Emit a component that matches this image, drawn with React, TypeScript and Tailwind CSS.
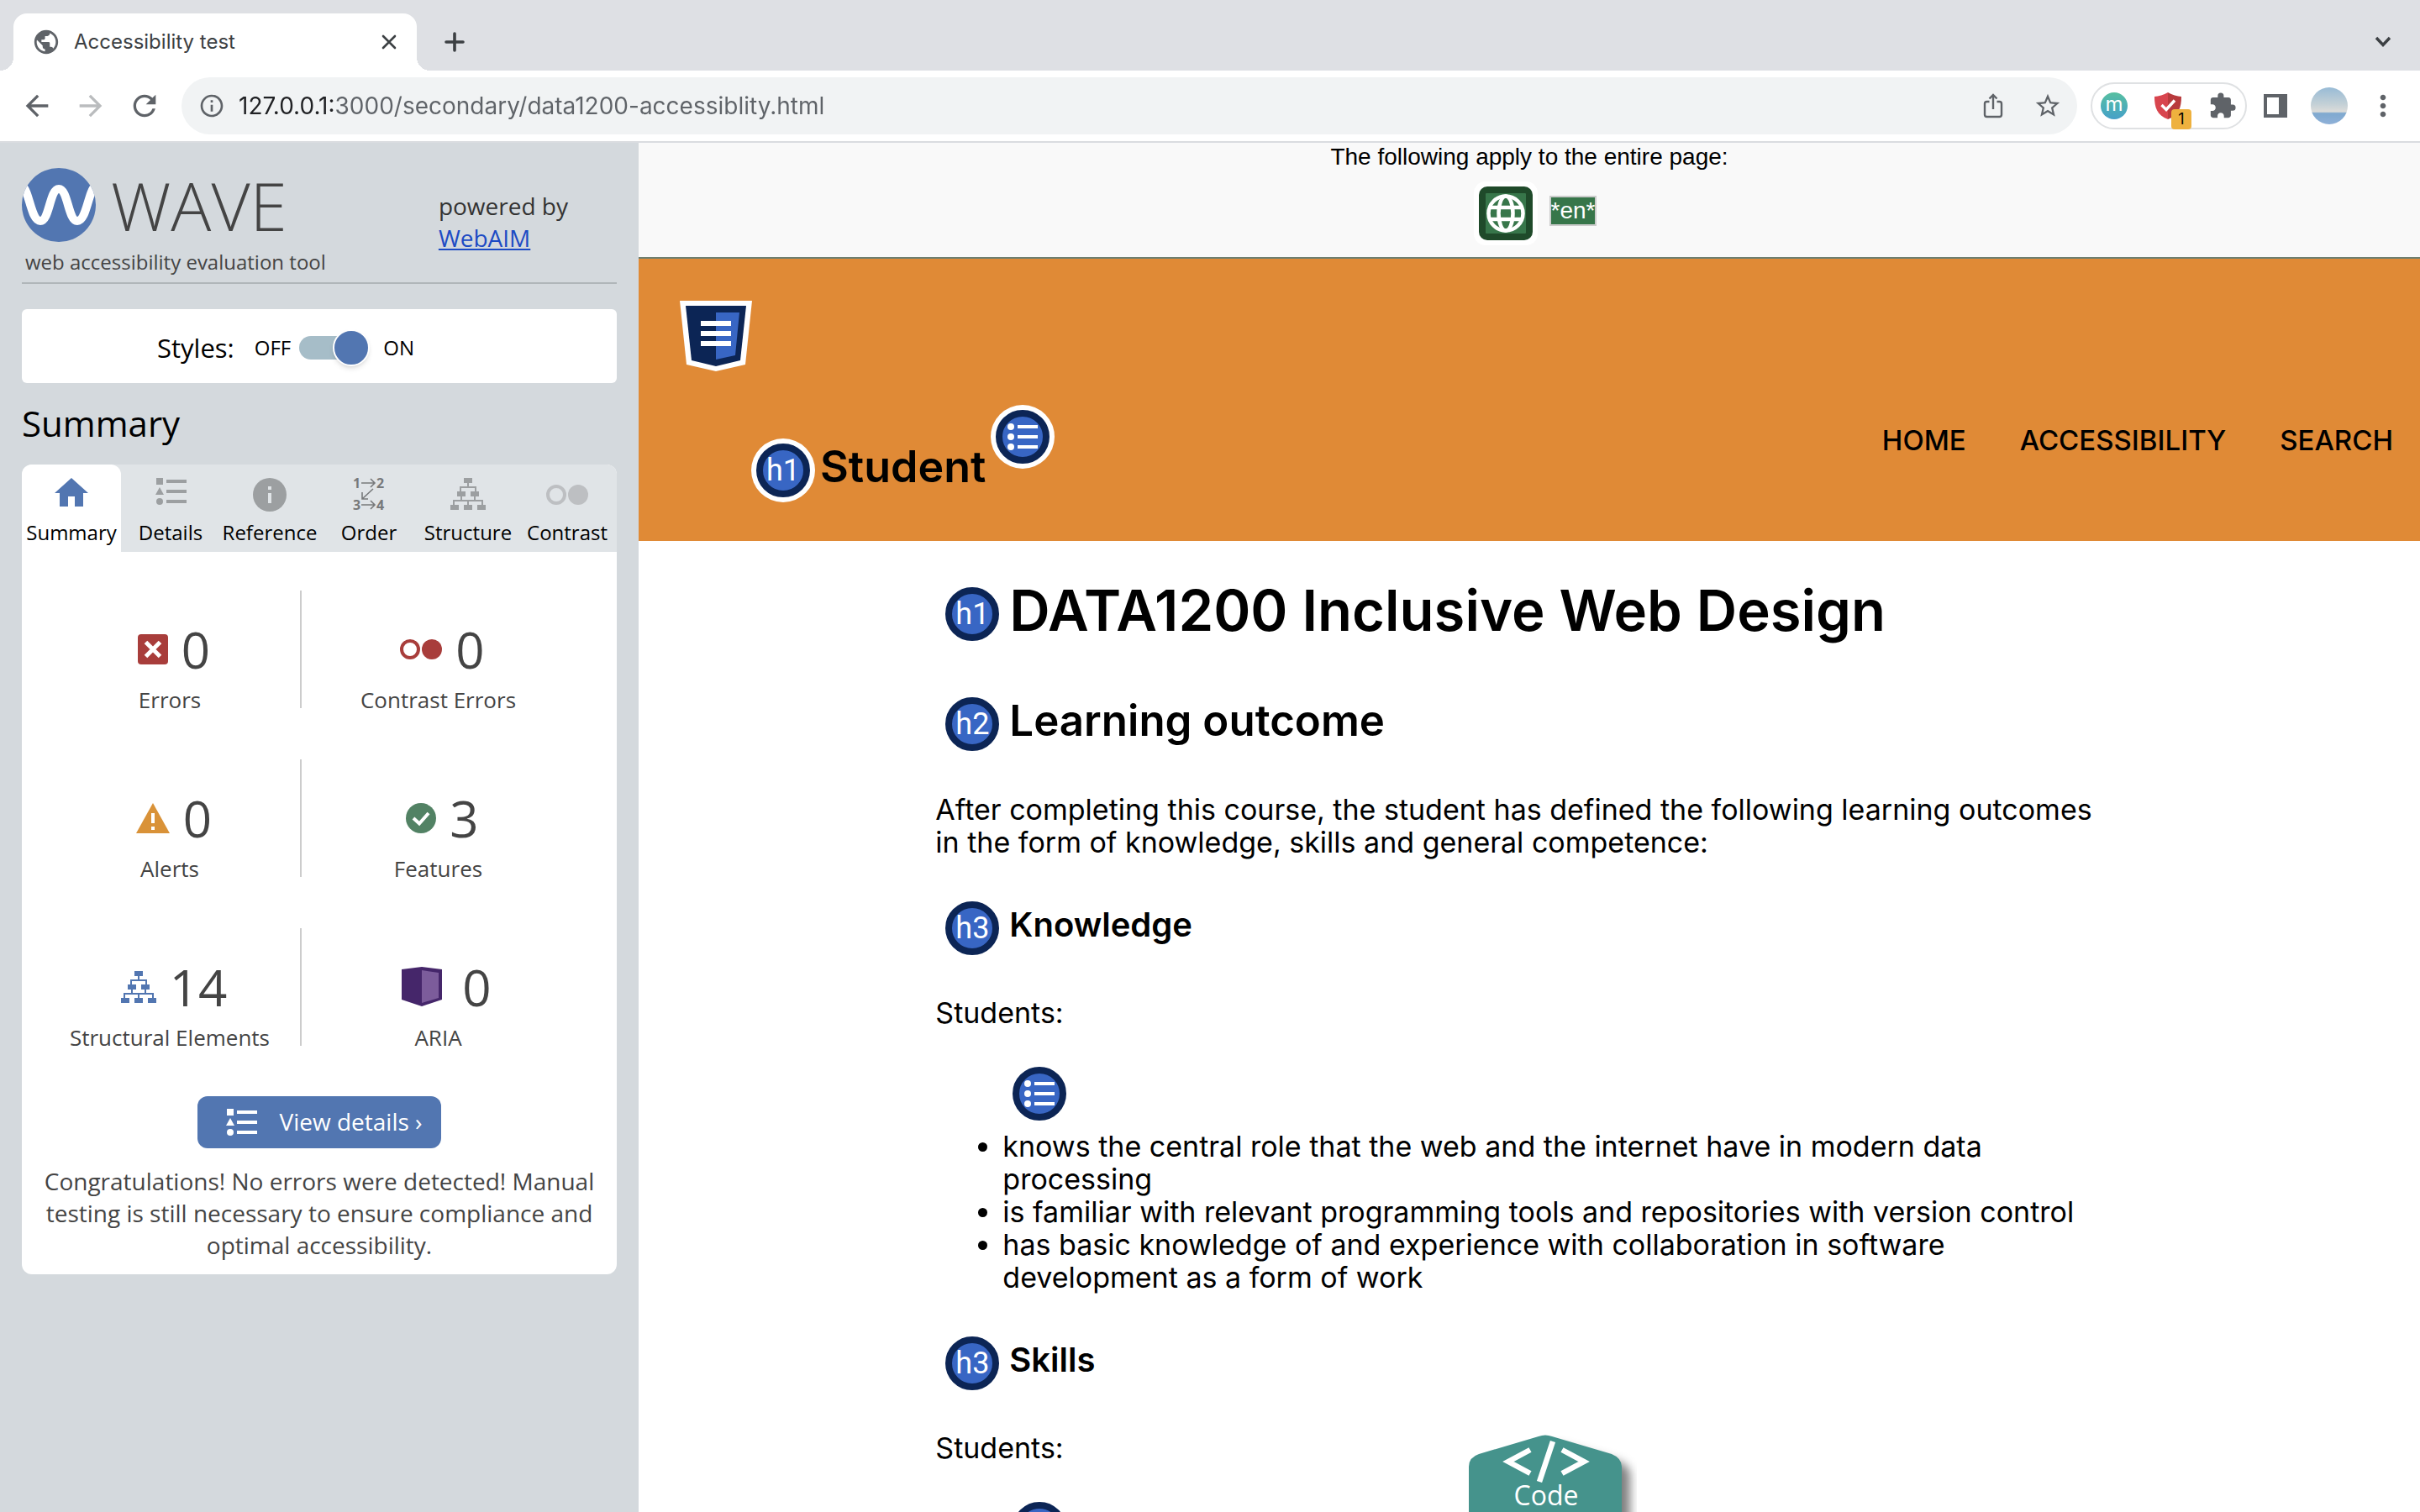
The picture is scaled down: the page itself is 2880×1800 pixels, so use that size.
import type { ReactNode } from "react";
import {
  MdArrowBack,
  MdArrowForward,
  MdExtension,
  MdInfoOutline,
  MdMoreVert,
  MdPublic,
  MdRefresh,
  MdStarBorder,
} from "react-icons/md";

/* ---------- Drawings ---------- */

function CloseIcon() {
  return (
    <svg width="18" height="18" viewBox="0 0 18 18" stroke="#3c4043" strokeWidth="2.600" strokeLinecap="round">
      <path d="M2 2 16 16M16 2 2 16" />
    </svg>
  );
}

function PlusIcon() {
  return (
    <svg width="26" height="26" viewBox="0 0 26 26" stroke="#3c4043" strokeWidth="3.600" strokeLinecap="round">
      <path d="M13 3V23M3 13H23" />
    </svg>
  );
}

function ChevronIcon() {
  return (
    <svg width="20" height="14" viewBox="0 0 20 14" fill="none" stroke="#3c4043" strokeWidth="3.4">
      <path d="M2 2 10 10.5 18 2" />
    </svg>
  );
}

function ShareIcon() {
  return (
    <svg width="24" height="30" viewBox="0 0 24 30" fill="none" stroke="#5f6368" strokeWidth="2.4">
      <path d="M7.500 10H4.500a2.500 2.500 0 0 0-2.500 2.500V25.500A2.500 2.500 0 0 0 4.500 28H19.500a2.500 2.500 0 0 0 2.500-2.500V12.500A2.500 2.500 0 0 0 19.500 10H16.500M12 19V3M7.500 6.500 12 2 16.500 6.500" />
    </svg>
  );
}

function ShieldIcon() {
  return (
    <svg width="32" height="32" viewBox="0 0 32 32">
      <path d="M16 0C11 3 5 4.500 0 5 0 18 3 27 16 32Z" fill="#d8454e" />
      <path d="M16 0C21 3 27 4.500 32 5 32 18 29 27 16 32Z" fill="#b83a3c" />
      <path d="M8.500 15 14 20.500 24 9.500" fill="none" stroke="#fff" strokeWidth="3.400" />
    </svg>
  );
}

function SidePanelIcon() {
  return (
    <svg width="28" height="28" viewBox="0 0 28 28">
      <path fillRule="evenodd" d="M0 0H28V28H0ZM4 4V24H18V4Z" fill="#5f6368" />
    </svg>
  );
}

function WaveLogo() {
  return (
    <svg width="88" height="88" viewBox="0 0 88 88">
      <clipPath id="disc">
        <circle cx="44" cy="44" r="44" />
      </clipPath>
      <circle cx="44" cy="44" r="44" fill="#5276b1" />
      <path
        clipPath="url(#disc)"
        d="M1 22C9 28 11 63 22 63S33 25 44 25 55 63 66 63 79 28 87 22"
        fill="none"
        stroke="#fff"
        strokeWidth="10"
      />
    </svg>
  );
}

function HomeIcon() {
  return (
    <svg width="40" height="34" viewBox="0 0 40 34" fill="#5276b1">
      <path d="M20 0 40 18H34V34H24V22H16V34H6V18H0Z" />
    </svg>
  );
}

function DetailsIcon() {
  return (
    <svg width="37" height="32" viewBox="0 0 37 32" fill="currentColor">
      <path d="M1 0H9V8H1ZM5 11 10 20H0ZM13 2H37V6H13ZM13 14H37V18H13ZM13 26H37V30H13Z" />
      <circle cx="5" cy="28" r="4" />
    </svg>
  );
}

function InfoIcon() {
  return (
    <svg width="40" height="40" viewBox="0 0 40 40">
      <circle cx="20" cy="20" r="20" fill="#9c9fa1" />
      <path d="M18 10H22V14H18ZM18 18H22V30H18Z" fill="#e0e4e7" />
    </svg>
  );
}

function OrderIcon() {
  return (
    <svg
      width="38"
      height="40"
      viewBox="0 0 38 40"
      fill="none"
      stroke="#77797b"
      strokeWidth="1.600"
      className="overflow-visible"
    >
      <path d="M10 6H26M21 1 26 6 21 11M10 32H26M21 27 26 32 21 37M24 13 11 25M11 17V25H18" />
      <g fill="#77797b" stroke="none" fontFamily="Open Sans" fontWeight="700" fontSize="16">
        <text x="0" y="12">1</text>
        <text x="28" y="12">2</text>
        <text x="0" y="38">3</text>
        <text x="28" y="38">4</text>
      </g>
    </svg>
  );
}

function TreeIcon() {
  return (
    <svg width="42" height="38" viewBox="0 0 42 38" fill="currentColor">
      <path d="M16 0H26V6H22V10H31V16H34V22H30V26H39V32H42V38H32V32H37V28H22V32H26V38H16V32H20V28H5V32H10V38H0V32H3V26H12V22H8V16H11V10H20V6H16ZM13 12V16H18V22H14V26H28V22H24V16H29V12Z" fillRule="evenodd" />
    </svg>
  );
}

function ContrastIcon() {
  return (
    <svg width="50" height="24" viewBox="0 0 50 24">
      <circle cx="12" cy="12" r="10" fill="none" stroke="currentColor" strokeWidth="4" />
      <circle cx="38" cy="12" r="12" fill="currentColor" />
    </svg>
  );
}

function ErrorIcon() {
  return (
    <svg width="36" height="36" viewBox="0 0 36 36">
      <rect width="36" height="36" rx="4" fill="#a83d3b" />
      <path d="M9.500 9.500 26.500 26.500M26.500 9.500 9.500 26.500" stroke="#fff" strokeWidth="5" />
    </svg>
  );
}

function AlertIcon() {
  return (
    <svg width="40" height="36" viewBox="0 0 40 36">
      <path d="M20 0 40 36H0Z" fill="#d99238" />
      <path d="M18 12H22V24H18ZM18 28H22V32H18Z" fill="#fff" />
    </svg>
  );
}

function FeatureIcon() {
  return (
    <svg width="36" height="36" viewBox="0 0 36 36">
      <circle cx="18" cy="18" r="18" fill="#528264" />
      <path d="M9 18 16 24.500 27 12" fill="none" stroke="#fff" strokeWidth="4" />
    </svg>
  );
}

function AriaIcon() {
  return (
    <svg width="48" height="48" viewBox="0 0 48 48">
      <path d="M0 3 24 0 48 3V39L24 47 0 39Z" fill="#45266a" />
      <path d="M24 4 44 7V37L24 43Z" fill="#7c5c9b" />
    </svg>
  );
}

function RegionIcon() {
  return (
    <svg width="86" height="84" viewBox="0 0 86 84">
      <path d="M0 0H86L78 76 43 84 8 76Z" fill="#fff" />
      <path d="M7 6H79L72 71 43 78 14 71Z" fill="#0c2555" />
      <path d="M43 14H71L66 65 43 70Z" fill="#3866c4" />
      <path d="M25 24H61V30H25ZM25 36H61V42H25ZM25 48H61V54H25Z" fill="#fff" />
    </svg>
  );
}

function LanguageIcon() {
  return (
    <svg width="76" height="76" viewBox="0 0 76 76">
      <rect width="76" height="76" rx="14" fill="#fff" />
      <rect x="6" y="6" width="64" height="64" rx="10" fill="#1f4a2a" />
      <rect x="14" y="14" width="48" height="48" rx="1" fill="#37764a" />
      <g fill="none" stroke="#fff" strokeWidth="4.500">
        <circle cx="38" cy="38" r="20.500" />
        <ellipse cx="38" cy="38" rx="8.500" ry="20.500" />
        <path d="M19 31H57M19 45H57" />
      </g>
    </svg>
  );
}

function ListGlyph() {
  return (
    <svg width="38" height="32" viewBox="0 0 38 32" fill="#fff">
      <circle cx="5" cy="4" r="4" />
      <circle cx="5" cy="16" r="4" />
      <circle cx="5" cy="28" r="4" />
      <path d="M13 2H37V6H13ZM13 14H37V18H13ZM13 26H37V30H13Z" />
    </svg>
  );
}

function Marker({ children, ringed }: { children: ReactNode; ringed?: boolean }) {
  return (
    <span
      className={
        "flex size-16 shrink-0 items-center justify-center rounded-full border-8 border-[#0c2555] bg-[#3866c4] font-[Roboto,sans-serif] text-[36px] leading-none font-normal text-white " +
        (ringed ? "ring-6 ring-white" : "")
      }
    >
      {children}
    </span>
  );
}

/* ---------- Browser frame ---------- */

function BrowserBar() {
  return (
    <header className="shrink-0 border-b-2 border-[#dadce0] bg-white font-[Inter,sans-serif]">
      <div className="flex h-[84px] items-end bg-[#dee0e4] px-4">
        <div className="relative flex h-[68px] w-[480px] items-center rounded-t-2xl bg-white pr-6 pl-[22px] before:absolute before:bottom-0 before:-left-4 before:size-4 before:bg-[radial-gradient(circle_at_0_0,#dee0e4_16px,#fff_16px)] after:absolute after:-right-4 after:bottom-0 after:size-4 after:bg-[radial-gradient(circle_at_100%_0,#dee0e4_16px,#fff_16px)]">
          <MdPublic size={34} className="text-[#5f6368]" />
          <span className="ml-4 flex-1 text-[24px] text-[#3c4043]">Accessibility test</span>
          <button aria-label="Close tab">
            <CloseIcon />
          </button>
        </div>
        <button aria-label="New tab" className="ml-8 flex h-[68px] items-center">
          <PlusIcon />
        </button>
        <button aria-label="Search tabs" className="mr-[18px] ml-auto flex h-[68px] items-center">
          <ChevronIcon />
        </button>
      </div>
      <div className="flex h-[84px] items-center px-6 text-[#5f6368]">
        <button aria-label="Back">
          <MdArrowBack size={40} />
        </button>
        <button aria-label="Forward" className="ml-6 text-[#babcbe]">
          <MdArrowForward size={40} />
        </button>
        <button aria-label="Reload" className="ml-6">
          <MdRefresh size={40} />
        </button>
        <div className="ml-6 flex h-[68px] flex-1 items-center rounded-full bg-[#f1f3f4] pr-[18px] pl-5">
          <MdInfoOutline size={32} />
          <input
            aria-label="Address"
            readOnly
            value="127.0.0.1:3000/secondary/data1200-accessiblity.html"
            className="ml-4 flex-1 bg-[linear-gradient(90deg,#202124_116px,#5f6368_116px)] bg-clip-text text-[28px] text-transparent outline-none"
          />
          <button aria-label="Share">
            <ShareIcon />
          </button>
          <button aria-label="Bookmark" className="ml-9">
            <MdStarBorder size={34} />
          </button>
        </div>
        <div className="ml-4 flex h-14 items-center rounded-full border-2 border-[#dfe1e3] px-2.5">
          <button className="flex size-8 items-center justify-center rounded-full bg-linear-to-b from-[#57bfa0] to-[#46a0c8] pb-1 text-[24px] leading-none text-white">
            m
          </button>
          <button aria-label="Shield" className="relative ml-8 size-8">
            <ShieldIcon />
            <span className="absolute top-5 left-5 flex size-6 items-center justify-center rounded-sm bg-[#eeb13e] text-[18px] leading-none text-black">
              1
            </span>
          </button>
          <button aria-label="Extensions" className="ml-8">
            <MdExtension size={34} />
          </button>
        </div>
        <button aria-label="Side panel" className="ml-5">
          <SidePanelIcon />
        </button>
        <button
          aria-label="Profile"
          className="ml-7 size-11 rounded-full bg-[linear-gradient(#98bbd6_0%,#c3d0d6_45%,#dcdcda_66%,#7fa9cf_70%,#8fb0d8_100%)]"
        />
        <button aria-label="Menu" className="ml-[22px]">
          <MdMoreVert size={40} />
        </button>
      </div>
    </header>
  );
}

/* ---------- WAVE sidebar ---------- */

const tabs: { label: string; icon: ReactNode }[] = [
  { label: "Summary", icon: <HomeIcon /> },
  { label: "Details", icon: <DetailsIcon /> },
  { label: "Reference", icon: <InfoIcon /> },
  { label: "Order", icon: <OrderIcon /> },
  { label: "Structure", icon: <TreeIcon /> },
  { label: "Contrast", icon: <ContrastIcon /> },
];

const tabTone = [
  "rounded-t-xl bg-white",
  "text-[#9c9fa1]",
  "text-[#9c9fa1]",
  "text-[#9c9fa1]",
  "text-[#9c9fa1]",
  "text-[#bdbfc2]",
];

type Count = { label: string; value: number; icon: ReactNode; tone: string };

const counts: [Count, Count][] = [
  [
    { label: "Errors", value: 0, icon: <ErrorIcon />, tone: "ml-2.5 mr-4" },
    { label: "Contrast Errors", value: 0, icon: <ContrastIcon />, tone: "ml-2.5 mr-4 text-[#a83d3b]" },
  ],
  [
    { label: "Alerts", value: 0, icon: <AlertIcon />, tone: "ml-2.5 mr-4" },
    { label: "Features", value: 3, icon: <FeatureIcon />, tone: "ml-2.5 mr-4" },
  ],
  [
    { label: "Structural Elements", value: 14, icon: <TreeIcon />, tone: "ml-2.5 mr-4 text-[#5276b1]" },
    { label: "ARIA", value: 0, icon: <AriaIcon />, tone: "ml-5 mr-6" },
  ],
];

function CountCell({ item }: { item: Count }) {
  return (
    <div className="flex flex-col items-center pt-[34px] text-[#444]">
      <div className="flex h-[72px] items-center">
        <span className={item.tone}>{item.icon}</span>
        <span className="text-[60px] leading-[72px]">{item.value}</span>
      </div>
      <span className="mt-2 text-[26px] leading-8">{item.label}</span>
    </div>
  );
}

function Sidebar() {
  return (
    <aside className="w-[760px] shrink-0 bg-[#d4d9dd] px-[26px] pt-[30px] font-['Open_Sans',sans-serif]">
      <div className="flex justify-between border-b-2 border-[#b0b6b9] pb-1">
        <div className="text-[#444]">
          <div className="flex h-[88px] items-center">
            <WaveLogo />
            <span className="ml-[18px] text-[80px] leading-[88px] font-light">WAVE</span>
          </div>
          <p className="pt-1 pl-1 text-[24px] leading-10">web accessibility evaluation tool</p>
        </div>
        <p className="mr-[58px] pt-[26px] text-[28px] leading-[38px] text-[#333]">
          powered by
          <br />
          <a href="#webaim" className="text-[#1c4bc4] underline">
            WebAIM
          </a>
        </p>
      </div>

      <div className="mt-[30px] flex h-[88px] items-center justify-center rounded-md bg-white pt-1 pr-20">
        <label htmlFor="styles" className="text-[31px]">
          Styles:
        </label>
        <span className="ml-6 text-[24px]">OFF</span>
        <input
          id="styles"
          type="checkbox"
          role="switch"
          defaultChecked
          className="relative mx-2.5 h-7 w-[82px] appearance-none rounded-full bg-[#a6bdc8] before:absolute before:-top-2 before:-right-0.5 before:size-11 before:rounded-full before:border-2 before:border-white before:bg-[#5276b1] before:shadow-md"
        />
        <span className="ml-2 text-[24px]">ON</span>
      </div>

      <h2 className="mt-[18px] text-[42px] leading-[60px]">Summary</h2>

      <div className="mt-[19px] rounded-xl bg-white pb-3">
        <div role="tablist" className="grid h-[104px] grid-cols-6 rounded-t-xl bg-[#e0e4e7]">
          {tabs.map((tab, i) => (
            <button
              key={tab.label}
              role="tab"
              aria-selected={i === 0}
              className={"flex flex-col items-center justify-between pt-4 pb-[5px] " + tabTone[i]}
            >
              <span className={i === 5 ? "pt-2" : ""}>{tab.icon}</span>
              <span className="text-[24px] leading-9 text-black">{tab.label}</span>
            </button>
          ))}
        </div>

        <div className="flex flex-col gap-[61px] pt-[46px] pr-[50px] pl-[21px]">
          {counts.map(([left, right]) => (
            <div key={left.label} className="grid grid-cols-[310px_1fr] grid-rows-[140px]">
              <CountCell item={left} />
              <div className="border-l-2 border-[#ccc]">
                <CountCell item={right} />
              </div>
            </div>
          ))}
        </div>

        <button className="mx-auto mt-[60px] flex h-[62px] items-center rounded-xl bg-[#5276b1] pr-[22px] pl-[34px] text-[28px] text-white">
          <DetailsIcon />
          <span className="ml-[26px] pb-0.5">View details ›</span>
        </button>
        <p className="mt-5 px-5 pb-1 text-center text-[28px] leading-[38px] text-[#444]">
          Congratulations! No errors were detected! Manual testing is still necessary to ensure compliance and
          optimal accessibility.
        </p>
      </div>
    </aside>
  );
}

/* ---------- Evaluated page ---------- */

function PageBanner() {
  return (
    <div className="flex h-[138px] flex-col items-center border-b-2 border-[#6e7f70] bg-[#f9f9f9] font-['Liberation_Sans',sans-serif] text-[28px] text-black">
      <p className="leading-[34px]">The following apply to the entire page:</p>
      <div className="mt-3 flex items-center pl-6">
        <LanguageIcon />
        <span className="mr-2.5 mb-1.5 ml-3.5 border-2 border-[#ccc] bg-[#37764a] leading-8 text-white">*en*</span>
      </div>
    </div>
  );
}

function PageHeader() {
  return (
    <div className="bg-[#e08a36] pt-[50px] pr-8 pb-[46px]">
      <div className="pl-[49px]">
        <RegionIcon />
      </div>
      <div className="flex items-start pt-10 pl-[140px]">
        <div className="mt-10 flex h-[76px] items-center">
          <Marker ringed>h1</Marker>
          <h1 className="ml-3 pb-2 text-[52px] leading-[60px] font-semibold">Student</h1>
        </div>
        <div className="mt-1.5 ml-3">
          <Marker ringed>
            <ListGlyph />
          </Marker>
        </div>
        <nav className="mt-[22px] ml-auto flex gap-16 text-[33px] leading-10 font-medium">
          <a href="#home">HOME</a>
          <a href="#accessibility">ACCESSIBILITY</a>
          <a href="#search">SEARCH</a>
        </nav>
      </div>
    </div>
  );
}

function MarkedHeading({ level, children }: { level: "h1" | "h2" | "h3"; children: ReactNode }) {
  const Tag = level;
  const size = {
    h1: "text-[67px] leading-[80px]",
    h2: "text-[51px] leading-[72px]",
    h3: "text-[40px] leading-[72px]",
  }[level];
  return (
    <Tag className={"flex items-center pl-3 font-semibold " + size}>
      <span className="mt-2 mr-3">
        <Marker>{level}</Marker>
      </span>
      {children}
    </Tag>
  );
}

function PageBody() {
  return (
    <main className="mx-auto w-2/3 pt-[43px] pr-6 text-[34px] leading-[39px]">
      <MarkedHeading level="h1">DATA1200 Inclusive Web Design</MarkedHeading>
      <div className="mt-[55px]">
        <MarkedHeading level="h2">Learning outcome</MarkedHeading>
      </div>
      <p className="mt-[50px]">
        After completing this course, the student has defined the following learning outcomes in the form of
        knowledge, skills and general competence:
      </p>
      <div className="mt-[43px]">
        <MarkedHeading level="h3">Knowledge</MarkedHeading>
      </div>
      <p className="mt-[49px]">Students:</p>
      <div className="mt-[45px] ml-[92px]">
        <Marker>
          <ListGlyph />
        </Marker>
      </div>
      <ul className="mt-[11px] list-disc pl-20">
        <li>knows the central role that the web and the internet have in modern data processing</li>
        <li>is familiar with relevant programming tools and repositories with version control</li>
        <li>has basic knowledge of and experience with collaboration in software development as a form of work</li>
      </ul>
      <div className="mt-[43px]">
        <MarkedHeading level="h3">Skills</MarkedHeading>
      </div>
      <p className="mt-[49px]">Students:</p>
      <div className="mt-[45px] ml-[92px]">
        <Marker>
          <ListGlyph />
        </Marker>
      </div>
    </main>
  );
}

function CodeButton() {
  return (
    <button className="absolute bottom-0 left-1/2 ml-[-72px] h-[92px] w-[200px] overflow-hidden">
      <svg width="200" height="92" viewBox="0 0 200 92" fill="none">
        <defs>
          <filter id="soft" x="-20%" y="-20%" width="140%" height="140%">
            <feGaussianBlur stdDeviation="6" />
          </filter>
        </defs>
        <path
          d="M60 44L91 18Q100 10 109 13L178 32Q192 37 192 49V110H60Z"
          fill="#000"
          fillOpacity=".5"
          filter="url(#soft)"
        />
        <path d="M0 38Q0 27 12 23L83 2Q91 -1 99 2L170 23Q182 28 182 38V92H0Z" fill="#45938c" />
        <path d="M73 18 47 32 73 46M111 18 137 32 111 46M100 8 84 56" stroke="#fff" strokeWidth="6.500" />
      </svg>
      <span className="absolute inset-x-0 bottom-0 pr-4 text-center font-['Open_Sans',sans-serif] text-[32px] leading-10 font-normal text-white">
        Code
      </span>
    </button>
  );
}

export default function App() {
  return (
    <div className="flex h-screen flex-col overflow-hidden bg-white text-black">
      <BrowserBar />
      <div className="flex min-h-0 flex-1">
        <Sidebar />
        <section className="relative flex-1 overflow-hidden font-[Inter,sans-serif]">
          <PageBanner />
          <PageHeader />
          <PageBody />
          <CodeButton />
        </section>
      </div>
    </div>
  );
}
